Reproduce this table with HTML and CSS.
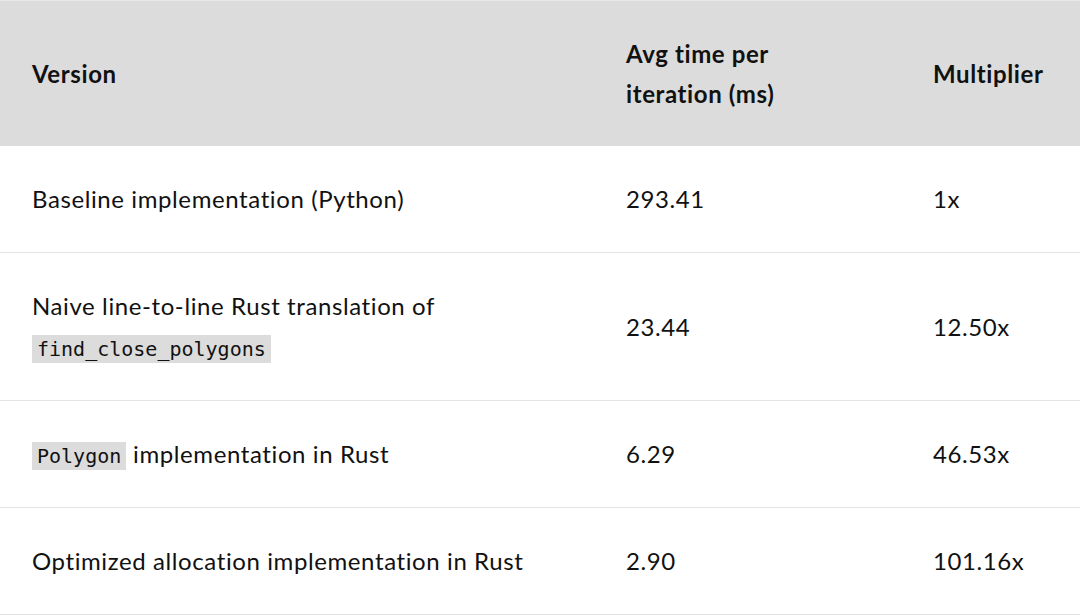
FILE: index.html
```html
<!DOCTYPE html>
<html>
<head>
<meta charset="utf-8">
<link rel="stylesheet" href="styles.css">
</head>
<body>
<table class="perf">
  <colgroup>
    <col class="c-version">
    <col class="c-time">
    <col class="c-mult">
  </colgroup>
  <thead>
    <tr>
      <th>Version</th>
      <th class="th-time">Avg time per iteration (ms)</th>
      <th>Multiplier</th>
    </tr>
  </thead>
  <tbody>
    <tr>
      <td>Baseline implementation (Python)</td>
      <td>293.41</td>
      <td>1x</td>
    </tr>
    <tr>
      <td>Naive line-to-line Rust translation of <code>find_close_polygons</code></td>
      <td>23.44</td>
      <td>12.50x</td>
    </tr>
    <tr>
      <td><code>Polygon</code> implementation in Rust</td>
      <td>6.29</td>
      <td>46.53x</td>
    </tr>
    <tr>
      <td>Optimized allocation implementation in Rust</td>
      <td>2.90</td>
      <td>101.16x</td>
    </tr>
  </tbody>
</table>
</body>
</html>
```

FILE: styles.css
```css
html, body {
  margin: 0;
  padding: 0;
  background: #ffffff;
}

.perf {
  width: 1080px;
  border-collapse: collapse;
  table-layout: fixed;
  font-family: Lato, "Liberation Sans", sans-serif;
  font-size: 24px;
  letter-spacing: 0.6px;
  line-height: 41px;
  color: #111111;
}

.c-version { width: 594px; }
.c-time { width: 307px; }
.c-mult { width: 179px; }

.perf th,
.perf td {
  padding: 32px 0 32px 32px;
  text-align: left;
  vertical-align: middle;
}

.perf thead tr {
  background: #dcdcdc;
  border-top: 1px solid #e8e8e8;
}

.perf th {
  font-weight: 700;
  line-height: 40px;
  padding-top: 33px;
}

.perf th.th-time {
  padding-right: 80px;
}

.perf tbody tr {
  border-bottom: 1px solid #e3e3e3;
}

.perf td {
  padding-bottom: 33px;
}

.perf td:first-child {
  padding-right: 20px;
}

.perf code {
  font-family: "DejaVu Sans Mono", monospace;
  font-size: 20px;
  line-height: 1;
  letter-spacing: 0;
  background: #dcdcdc;
  padding: 2px 5px;
  color: #111111;
}
```
